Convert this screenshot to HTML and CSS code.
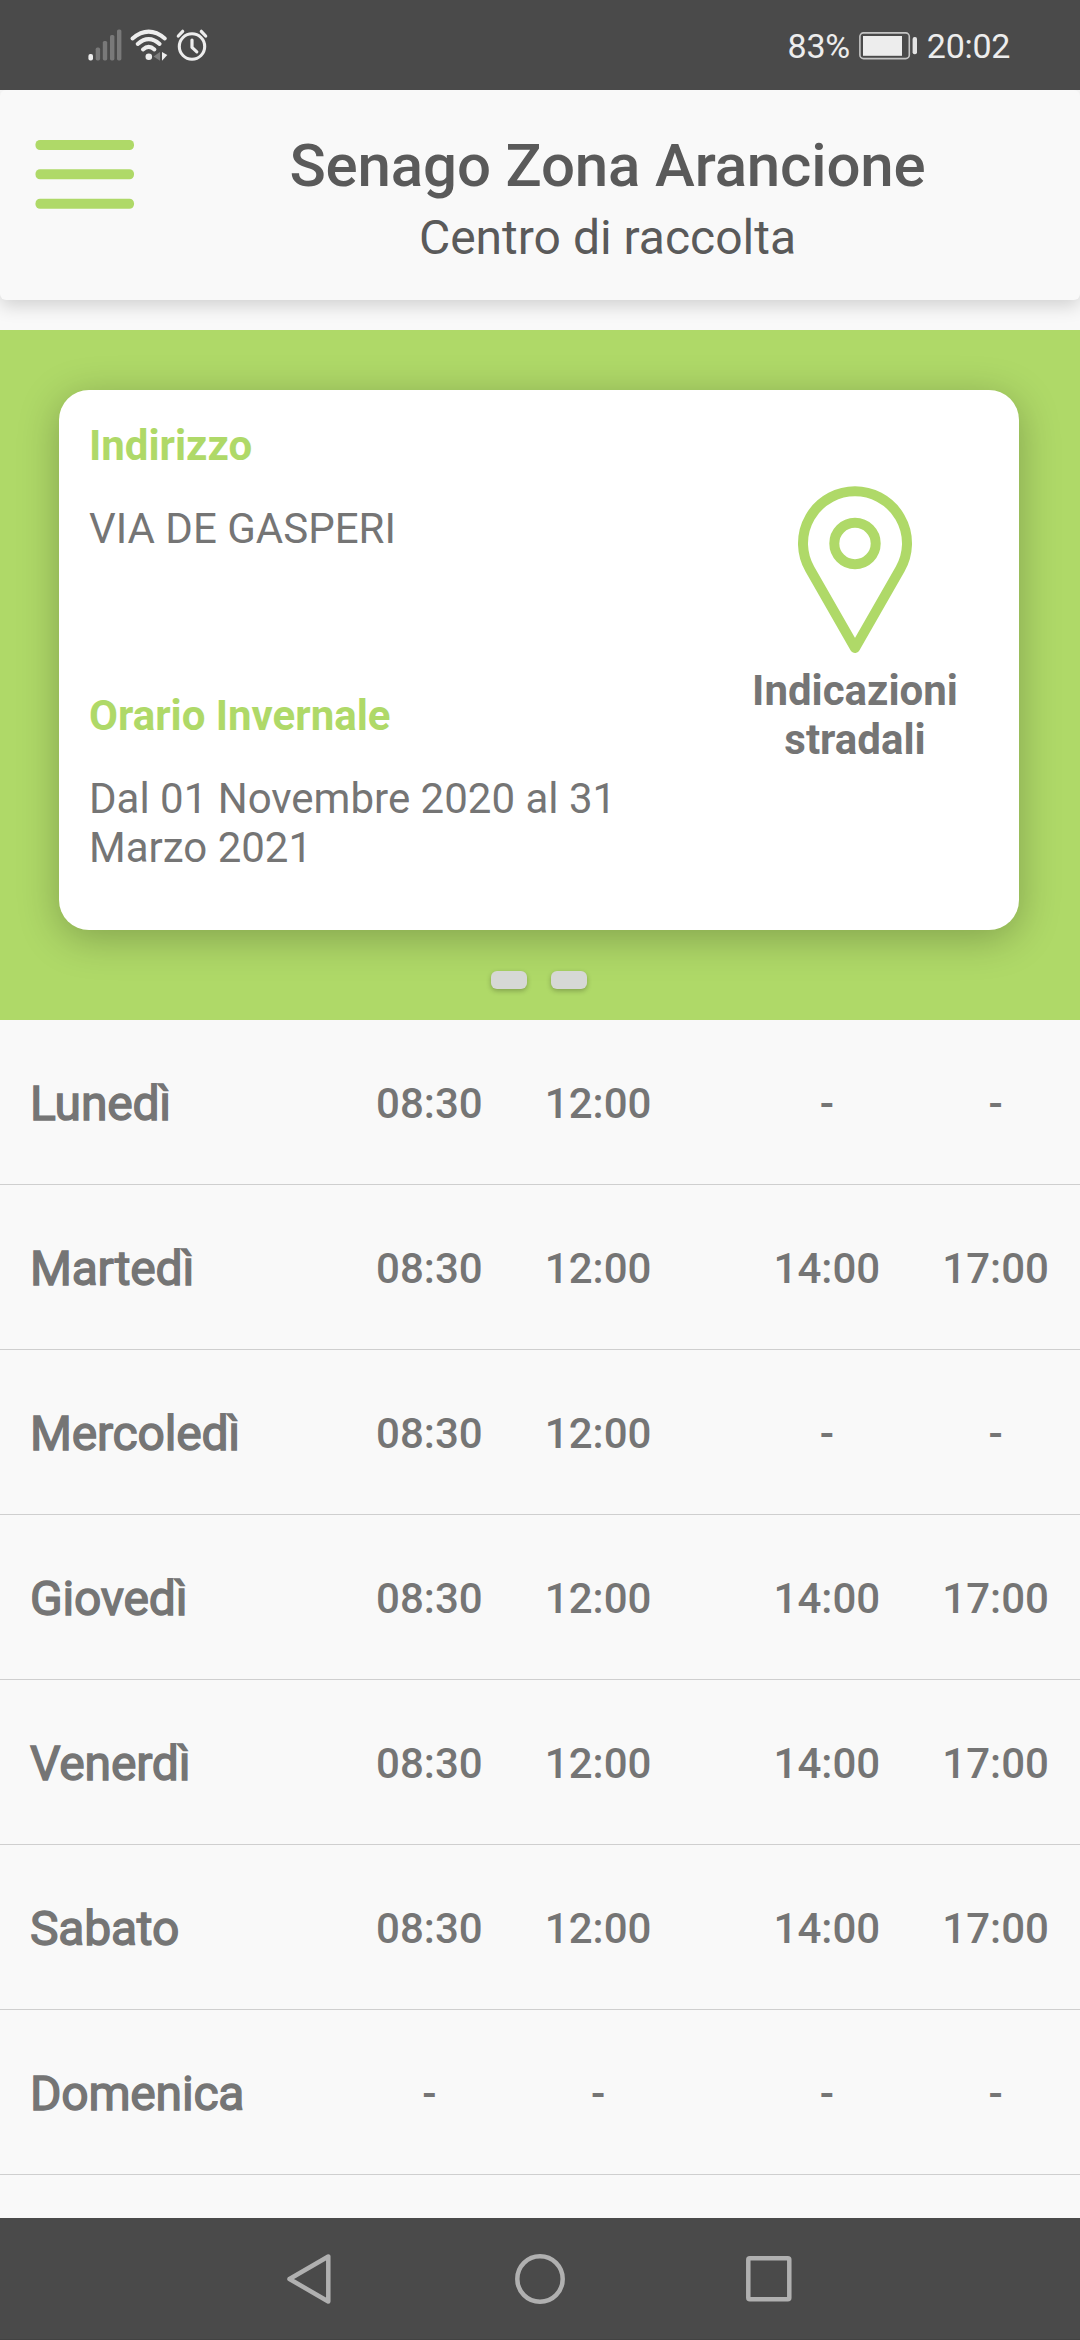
FILE: index.html
```html
<!DOCTYPE html>
<html lang="it">
<head>
<meta charset="utf-8">
<title>Centro di raccolta</title>
<link rel="stylesheet" href="styles.css">
</head>
<body>
<div class="status">
  <svg class="status-icons" width="130" height="90" viewBox="80 0 130 90" fill="none">
    <g fill="#797979">
      <rect x="95.7" y="47.6" width="4.4" height="12.8" rx="1.6"/>
      <rect x="102.8" y="41" width="4.4" height="19.4" rx="1.6"/>
      <rect x="110" y="35" width="4.4" height="25.4" rx="1.6"/>
      <rect x="117" y="29.4" width="4.4" height="31" rx="1.6"/>
    </g>
    <rect x="88.4" y="54" width="4.6" height="6.4" rx="2" fill="#ededed"/>
    <g stroke="#ededed" stroke-width="4" stroke-linecap="round">
      <path d="M132.5 38.5Q148.7 24.8 164.8 38.5"/>
      <path d="M137.7 44Q148.7 34.2 159.6 44"/>
      <path d="M143 49.4Q148.7 44.4 154.4 49.4"/>
    </g>
    <circle cx="148.8" cy="56.8" r="3.3" fill="#ededed"/>
    <path d="M160 52V60.7L153.5 56.4Z" fill="#7d7d7d"/>
    <path d="M162 52V60.7L167.3 55Z" fill="#ededed"/>
    <g stroke="#ededed" stroke-linecap="round" stroke-linejoin="round">
      <circle cx="192" cy="46.5" r="12.7" stroke-width="3.1"/>
      <path d="M192 40V47.3L196.8 51.8" stroke-width="3.2"/>
      <path d="M178.3 36L182.7 31.3M201.3 31.3L205.7 36" stroke-width="3.2"/>
    </g>
  </svg>
  <div class="status-right">
    <span>83%</span>
    <svg class="battery" width="59" height="28" viewBox="0 0 59 28">
      <rect x=".9" y=".9" width="49.4" height="25.7" rx="3.6" fill="none" stroke="#c4c4c4" stroke-width="1.6"/>
      <rect x="4" y="4" width="39" height="19.8" fill="#ededed"/>
      <rect x="53.6" y="5" width="4.4" height="17.3" rx="2" fill="#e4e4e4"/>
    </svg>
    <span>20:02</span>
  </div>
</div>

<header class="header">
  <svg class="menu" width="100" height="70" viewBox="0 0 100 70" fill="#afd968">
    <rect x=".5" width="98.5" height="10" rx="4.5"/>
    <rect x=".5" y="29.3" width="98.5" height="10" rx="4.5"/>
    <rect x=".5" y="58.8" width="98.5" height="10" rx="4.5"/>
  </svg>
  <div class="titles">
    <h1 class="title">Senago Zona Arancione</h1>
    <p class="subtitle">Centro di raccolta</p>
  </div>
</header>

<section class="hero">
  <div class="card">
    <div class="info">
      <h2 class="label">Indirizzo</h2>
      <p class="text address">VIA DE GASPERI</p>
      <h2 class="label">Orario Invernale</h2>
      <p class="text">Dal 01 Novembre 2020 al 31 Marzo 2021</p>
    </div>
    <div class="directions">
      <svg class="pin" width="120" height="172" viewBox="0 0 120 172" fill="none" stroke="#afd968" stroke-width="10" stroke-linejoin="round">
        <path d="M60 165L14.800 86A52 52 0 1 1 105.200 86Z"/>
        <circle cx="60" cy="60.500" r="20.700"/>
      </svg>
      <p class="directions-text">Indicazioni<br>stradali</p>
    </div>
  </div>
  <div class="dots"><span class="dot"></span><span class="dot"></span></div>
</section>

<main class="hours">
  <div class="row"><span class="day">Lunedì</span><span class="time">08:30</span><span class="time">12:00</span><span class="time afternoon">-</span><span class="time">-</span></div>
  <div class="row"><span class="day">Martedì</span><span class="time">08:30</span><span class="time">12:00</span><span class="time afternoon">14:00</span><span class="time">17:00</span></div>
  <div class="row"><span class="day">Mercoledì</span><span class="time">08:30</span><span class="time">12:00</span><span class="time afternoon">-</span><span class="time">-</span></div>
  <div class="row"><span class="day">Giovedì</span><span class="time">08:30</span><span class="time">12:00</span><span class="time afternoon">14:00</span><span class="time">17:00</span></div>
  <div class="row"><span class="day">Venerdì</span><span class="time">08:30</span><span class="time">12:00</span><span class="time afternoon">14:00</span><span class="time">17:00</span></div>
  <div class="row"><span class="day">Sabato</span><span class="time">08:30</span><span class="time">12:00</span><span class="time afternoon">14:00</span><span class="time">17:00</span></div>
  <div class="row"><span class="day">Domenica</span><span class="time">-</span><span class="time">-</span><span class="time afternoon">-</span><span class="time">-</span></div>
</main>

<nav class="navbar">
  <svg width="54" height="54" viewBox="0 0 54 54"><path d="M44.300 4.500V49.500L5.500 27Z"/></svg>
  <svg width="54" height="54" viewBox="0 0 54 54"><circle cx="27" cy="27" r="22.700"/></svg>
  <svg width="54" height="54" viewBox="0 0 54 54"><rect x="6.300" y="6.300" width="41" height="41" rx="1.500"/></svg>
</nav>
</body>
</html>
```
FILE: styles.css
```css
* {
  box-sizing: border-box;
  margin: 0;
  padding: 0;
}

body {
  width: 1080px;
  height: 2340px;
  display: flex;
  flex-direction: column;
  overflow: hidden;
  background: #f9f9f9;
  color: #757575;
  font-family: Roboto, "Liberation Sans", sans-serif;
}

svg {
  display: block;
  flex: none;
}

.status {
  flex: none;
  height: 90px;
  padding: 0 70px 0 80px;
  display: flex;
  justify-content: space-between;
  background: #4a4a4a;
}

.status-right {
  display: flex;
  align-items: center;
  gap: 9px;
  padding-top: 2px;
  color: #ededed;
  font-size: 34px;
  letter-spacing: -0.3px;
}

.header {
  flex: none;
  height: 210px;
  display: flex;
  padding: 41px 0 0 35px;
  border-radius: 6px;
  background: #f9f9f9;
  box-shadow: 0 6px 18px rgba(0, 0, 0, 0.16);
  clip-path: inset(0 0 -30px 0);
}

.menu {
  margin-top: 9px;
}

.titles {
  flex: 1;
  text-align: center;
  color: #5a5a5a;
}

.title {
  font-size: 60px;
  font-weight: 500;
  line-height: 70px;
  letter-spacing: -0.15px;
}

.subtitle {
  margin-top: 9px;
  font-size: 48px;
  line-height: 56px;
}

.hero {
  flex: none;
  height: 690px;
  margin-top: 30px;
  padding: 60px 61px 0 59px;
  background: #afd968;
}

.card {
  height: 540px;
  padding: 31px 29px 31px 30px;
  display: flex;
  justify-content: space-between;
  border-radius: 30px;
  background: #fff;
  box-shadow: 0 8px 40px rgba(0, 0, 0, 0.26);
}

.info {
  width: 560px;
  font-size: 42px;
  line-height: 49px;
}

.label {
  margin-bottom: 34px;
  color: #afd968;
  font-size: 42px;
  font-weight: 700;
}

.address {
  margin-bottom: 138px;
}

.directions {
  width: 270px;
  display: flex;
  flex-direction: column;
  align-items: center;
  padding-top: 62px;
}

.directions-text {
  margin-top: 11px;
  font-size: 42px;
  font-weight: 700;
  line-height: 49px;
  text-align: center;
}

.dots {
  display: flex;
  justify-content: center;
  gap: 24px;
  margin-top: 41px;
}

.dot {
  width: 36px;
  height: 18px;
  border-radius: 6px;
  background: #d6d8d5;
  box-shadow: 0 2px 5px rgba(0, 0, 0, 0.25);
}

.hours {
  flex: 1;
}

.row {
  height: 165px;
  display: flex;
  align-items: center;
  padding-left: 30px;
  border-bottom: 1px solid #cfcfcf;
}

.day {
  width: 315px;
  padding-top: 3px;
  font-size: 48px;
  letter-spacing: -0.2px;
  -webkit-text-stroke: 1.4px #757575;
}

.time {
  width: 168.75px;
  padding-top: 3px;
  font-size: 42px;
  font-weight: 500;
  text-align: center;
}

.afternoon {
  margin-left: 60px;
}

.navbar {
  flex: none;
  height: 122px;
  padding: 34px 284px 0;
  display: flex;
  justify-content: space-between;
  background: #4a4a4a;
  border-bottom: 1px solid #424242;
}

.navbar svg {
  fill: none;
  stroke: #b0b0b0;
  stroke-width: 4.5;
  stroke-linejoin: round;
}
```
